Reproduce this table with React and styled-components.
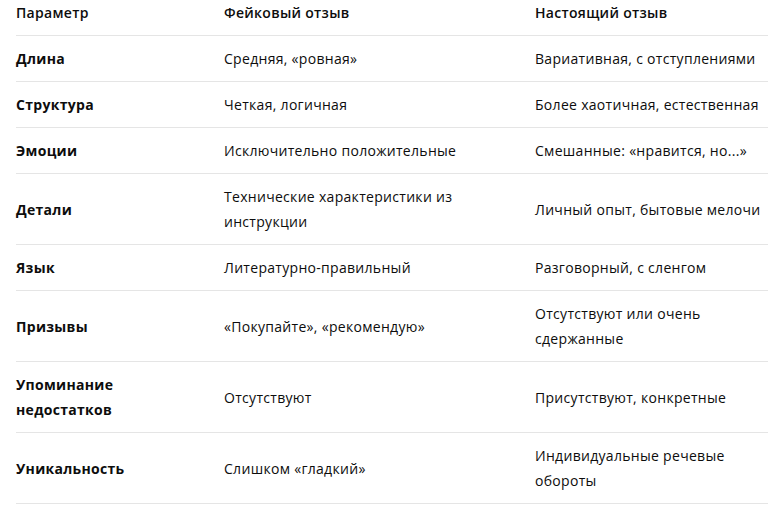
import React from "react";
import styled, { createGlobalStyle } from "styled-components";

const Global = createGlobalStyle`
  html, body { margin: 0; padding: 0; background: #ffffff; }
  body {
    font-family: "Open Sans", "Noto Sans", sans-serif;
    color: #0d0d0d;
    -webkit-font-smoothing: antialiased;
  }
`;

const Wrap = styled.div`
  padding: 0 16px;
`;

const Table = styled.table`
  width: 752px;
  border-collapse: collapse;
  table-layout: fixed;
  font-size: 14px;
  line-height: 25px;
  letter-spacing: 0.3px;
`;

const Col = styled.col`
  width: ${(p) => p.$w};
`;

const HeadCell = styled.th`
  text-align: left;
  font-weight: 600;
  padding: 0 16px 10px 0;
  border-bottom: 1px solid #e5e5e5;
  vertical-align: middle;
  &:last-child { padding-right: 0; }
`;

const Row = styled.tr`
  border-bottom: 1px solid #e5e5e5;
`;

const Cell = styled.td`
  padding: 10px 16px 10px 0;
  vertical-align: middle;
  font-weight: ${(p) => (p.$label ? 700 : 400)};
  &:last-child { padding-right: 0; }
`;

const rows = [
  ["Длина", "Средняя, «ровная»", "Вариативная, с отступлениями"],
  ["Структура", "Четкая, логичная", "Более хаотичная, естественная"],
  ["Эмоции", "Исключительно положительные", "Смешанные: «нравится, но...»"],
  ["Детали", "Технические характеристики из инструкции", "Личный опыт, бытовые мелочи"],
  ["Язык", "Литературно-правильный", "Разговорный, с сленгом"],
  ["Призывы", "«Покупайте», «рекомендую»", "Отсутствуют или очень сдержанные"],
  ["Упоминание недостатков", "Отсутствуют", "Присутствуют, конкретные"],
  ["Уникальность", "Слишком «гладкий»", "Индивидуальные речевые обороты"],
];

export default function App() {
  return (
    <Wrap>
      <Global />
      <Table>
        <colgroup>
          <Col $w="208px" />
          <Col $w="311px" />
          <Col $w="233px" />
        </colgroup>
        <thead>
          <tr>
            <HeadCell>Параметр</HeadCell>
            <HeadCell>Фейковый отзыв</HeadCell>
            <HeadCell>Настоящий отзыв</HeadCell>
          </tr>
        </thead>
        <tbody>
          {rows.map((r) => (
            <Row key={r[0]}>
              <Cell $label>{r[0]}</Cell>
              <Cell>{r[1]}</Cell>
              <Cell>{r[2]}</Cell>
            </Row>
          ))}
        </tbody>
      </Table>
    </Wrap>
  );
}
